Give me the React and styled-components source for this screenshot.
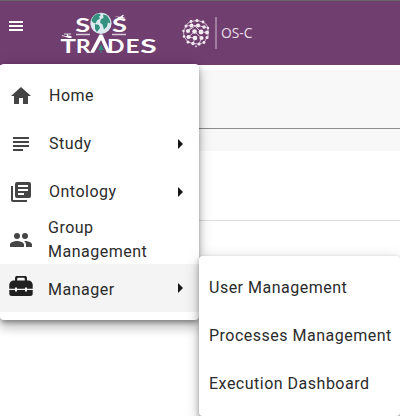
import React from "react";
import styled, { createGlobalStyle } from "styled-components";
import { MdHome, MdSubject } from "react-icons/md";

const GlobalStyle = createGlobalStyle`
  * { box-sizing: border-box; }
  body { margin: 0; background: #fff; overflow: hidden; font-family: Roboto, sans-serif; }
`;

const Page = styled.div`
  position: relative;
  width: 400px;
  height: 416px;
  overflow: hidden;
  background: #fff;
`;

const Header = styled.header`
  display: flex;
  height: 65px;
  border-top: 1px solid #686868;
  background: #713e70;
`;

const MenuButton = styled.button`
  display: flex;
  flex-direction: column;
  gap: 2px;
  width: 15px;
  height: 10px;
  margin: 20px 0 0 9px;
  padding: 0;
  border: 0;
  background: none;
`;

const MenuBar = styled.span`
  width: 14px;
  height: 2px;
  background: #fff;
`;

const BrandLogo = styled.svg`
  width: 104px;
  height: 50px;
  margin: 7px 0 0 34px;
`;

const PartnerLogo = styled.svg`
  width: 80px;
  height: 40px;
  margin: 12px 0 0 18px;
`;

const FilterBand = styled.div`
  height: 81px;
  margin-top: 5px;
  padding-top: 58px;
  background: #f8f8f8;
`;

const Rule = styled.div`
  height: 1px;
  background: ${(p) => p.$color};
`;

const TableHead = styled.div`
  height: 70px;
  padding-top: 69px;
`;

const MenuPanel = styled.nav`
  position: absolute;
  left: ${(p) => p.$left}px;
  top: ${(p) => p.$top}px;
  width: ${(p) => p.$width}px;
  padding: 8px 0;
  border-radius: 4px;
  background: #fff;
  box-shadow: 0 5px 5px -3px rgba(0, 0, 0, 0.2), 0 8px 10px 1px rgba(0, 0, 0, 0.14),
    0 3px 14px 2px rgba(0, 0, 0, 0.12), 0 2px 5px rgba(0, 0, 0, 0.22);
`;

const MenuItem = styled.a`
  display: flex;
  align-items: center;
  height: 48px;
  padding: 0 16px 0 9px;
  color: #2b2b2b;
  background: ${(p) => (p.$active ? "#f4f4f4" : "transparent")};
  font-size: 16px;
  line-height: 24px;
  letter-spacing: 0.5px;
`;

const IconSlot = styled.span`
  display: flex;
  width: 24px;
  margin-right: ${(p) => p.$gap}px;
  color: ${(p) => p.$color || "#454545"};
`;

const Label = styled.span`
  flex: 1;
  padding-top: ${(p) => p.$drop || 0}px;
`;

const Arrow = styled.span`
  border-left: 5px solid #151515;
  border-top: 5px solid transparent;
  border-bottom: 5px solid transparent;
`;

const SubItem = styled(MenuItem)`
  padding: 0 0 0 10px;
  white-space: nowrap;
`;

const Glyph = styled.svg`
  width: 24px;
  height: 24px;
  fill: currentColor;
`;

const LibraryIcon = () => (
  <Glyph viewBox="0 0 24 24">
    <path d="M2 6h2v14h14v2H4q-2 0-2-2z" />
    <path
      fillRule="evenodd"
      d="M8 2h12q2 0 2 2v12q0 2-2 2H8q-2 0-2-2V4q0-2 2-2zM9 5v2h10V5zM9 9v2h10V9zM9 13v2h6v-2z"
    />
  </Glyph>
);

const PeopleIcon = () => (
  <Glyph viewBox="0 0 24 24">
    <circle cx="8" cy="8" r="3" />
    <circle cx="16" cy="8" r="3" />
    <path d="M8 13c-2.330 0-7 1.170-7 3.500V19h14v-2.500c0-2.330-4.670-3.500-7-3.500z" />
    <path d="M16 13q-.5 0-.97.05Q17 14.500 17 16.500V19h6v-2.500c0-2.330-4.670-3.500-7-3.500z" />
  </Glyph>
);

const ToolboxIcon = () => (
  <Glyph viewBox="0 1 24 24">
    <path
      fillRule="evenodd"
      d="M6 5.500V3.500Q6 .5 9 .5h6q3 0 3 3v2h2q3 .5 3.700 4v4.300H18v-1.300h-2v1.300H8v-1.300H6v1.300H.3V9.500Q1 6 4 5.500zM8.200 5.500h7.600V3.800Q15.800 2.700 14.700 2.700H9.300Q8.200 2.700 8.200 3.800z"
    />
    <path d="M.3 15H6v1.400h2V15h8v1.400h2V15h5.700v3.500q0 2.500-2.500 2.500H2.800Q.3 21 .3 18.500z" />
  </Glyph>
);

const items = [
  { label: "Home", icon: <MdHome size={24} />, gap: 16 },
  { label: "Study", icon: <MdSubject size={24} />, gap: 16, arrow: true },
  { label: "Ontology", icon: <LibraryIcon />, gap: 16, arrow: true },
  { label: "Group Management", icon: <PeopleIcon />, gap: 15 },
  { label: "Manager", icon: <ToolboxIcon />, gap: 15, arrow: true, active: true, color: "#202020", drop: 3 },
];

function SosTrades() {
  return (
    <BrandLogo viewBox="58 8 104 50" aria-label="SOS Trades">
      <g fill="#fff" fontFamily="Lato, sans-serif" fontWeight="700">
        <text x="75.2" y="32.4" fontSize="18.5" textLength="15" lengthAdjust="spacingAndGlyphs">S</text>
        <text x="112" y="32.4" fontSize="18.5" textLength="15" lengthAdjust="spacingAndGlyphs">S</text>
        <text x="60.5" y="52.7" fontSize="18.5" textLength="15.5" lengthAdjust="spacingAndGlyphs">T</text>
        <text x="75.8" y="52.7" fontSize="18.5" textLength="15" lengthAdjust="spacingAndGlyphs">R</text>
        <text x="107" y="52.7" fontSize="18.5" textLength="17.5" lengthAdjust="spacingAndGlyphs">D</text>
        <text x="125.5" y="52.7" fontSize="18.5" textLength="14" lengthAdjust="spacingAndGlyphs">E</text>
        <text x="140.3" y="52.7" fontSize="18.5" textLength="16.5" lengthAdjust="spacingAndGlyphs">S</text>
      </g>
      <path d="M76 34.5h14M112 34.5h14" stroke="#d9cad9" strokeWidth="1.3" />
      <path d="M90 52.700L99.500 34.500h3L110.500 52.700h-3.600L101 40L94 52.700z" fill="#fff" />
      <path d="M101 44l3 6h-6z" fill="#35877f" />
      <path d="M101 49v4" stroke="#35877f" />
      <circle cx="101" cy="23.3" r="10.6" fill="#dce9ef" />
      <g fill="#35917f">
        <path d="M92 19q2-5 7-5.500l2 1.500-2 1.500 1 2-3 2-1.500 3-2.500-1-1.500-2z" />
        <path d="M95 24l4 1 1 3-3 4-2-3z" />
        <path d="M103 14.500l4 1 2.500 4 1 4-2.500-1-1 4-3 3-1.500-5-2.500-2 1-3.500 2.500-1z" />
      </g>
      <path d="M114.500 16.500l5.500.2 3-2 1 .2-1.500 2 3 1-1 .6-4-.4-4 1 2-1.500z" fill="#fff" />
      <path d="M64 34h7M67.500 34v2M62 35.500l3.500 1h6" fill="none" stroke="#fff" strokeWidth="0.8" />
      <path d="M65 36.300q2-1.300 5-.6l2 1.700q-4 1.600-7-1.100z" fill="#fff" />
    </BrandLogo>
  );
}

const dots = [
  [191, 21.5, 1.4], [197, 20.5, 1.5], [203, 22, 1.4],
  [186, 26, 1.5], [191.5, 25.5, 2], [198, 25.5, 2.1], [204, 27, 1.8], [208, 28, 1.2],
  [183.5, 31, 1.2], [188, 31, 2.1], [194.5, 31.5, 2.3], [201, 32, 2.4], [207, 32.5, 1.9],
  [184, 36.5, 1.3], [188.5, 37, 2.1], [195, 38, 2.3], [201.5, 38, 2.1], [207, 37.5, 1.5],
  [188, 42, 1.5], [193, 43.5, 1.7], [199, 44, 1.6], [204, 42.5, 1.4],
  [196, 46.3, 0.9],
];

function Osc() {
  return (
    <PartnerLogo viewBox="180 13 80 40" aria-label="OS-C">
      <g fill="#f7f1f7">
        {dots.map(([x, y, r]) => (
          <circle key={`${x}-${y}`} cx={x} cy={y} r={r} />
        ))}
      </g>
      <path
        d="M186 26l6-.5 6 0 6 1.5 4 1M188 31l4-5M188 31l7-5 6 6 6 .5M194.500 31.500l7 6.500M188.500 37l6-5.500M188.500 37l6.500 1M195 38l-2 5.500 6 .5 2.500-6M188 42l5 1.500M199 44l5-1.500 3-5M191 21.500q6-2.500 12 .5M186 26q2-4 5-4.500M203 22q4 2 5 6v9M186 26l-2.500 5 .5 5.500 4 5.500"
        fill="none"
        stroke="#eadfea"
        strokeWidth="0.8"
      />
      <path d="M216 17v32" stroke="#b79bb6" strokeWidth="1.4" />
      <text x="221" y="38" fill="#eadfea" fontFamily="Open Sans, sans-serif" fontSize="14" textLength="31.5" lengthAdjust="spacingAndGlyphs">OS-C</text>
    </PartnerLogo>
  );
}

export default function App() {
  return (
    <Page>
      <GlobalStyle />
      <Header>
        <MenuButton aria-label="Open menu">
          <MenuBar /><MenuBar /><MenuBar />
        </MenuButton>
        <SosTrades />
        <Osc />
      </Header>
      <FilterBand><Rule $color="#8c8c8c" /></FilterBand>
      <TableHead><Rule $color="#dedede" /></TableHead>
      <MenuPanel $left={0} $top={64} $width={199}>
        {items.map((it) => (
          <MenuItem key={it.label} $active={it.active}>
            <IconSlot $gap={it.gap} $color={it.color}>{it.icon}</IconSlot>
            <Label $drop={it.drop}>{it.label}</Label>
            {it.arrow && <Arrow />}
          </MenuItem>
        ))}
      </MenuPanel>
      <MenuPanel $left={199} $top={256} $width={201}>
        {["User Management", "Processes Management", "Execution Dashboard"].map((label) => (
          <SubItem key={label}>{label}</SubItem>
        ))}
      </MenuPanel>
    </Page>
  );
}
